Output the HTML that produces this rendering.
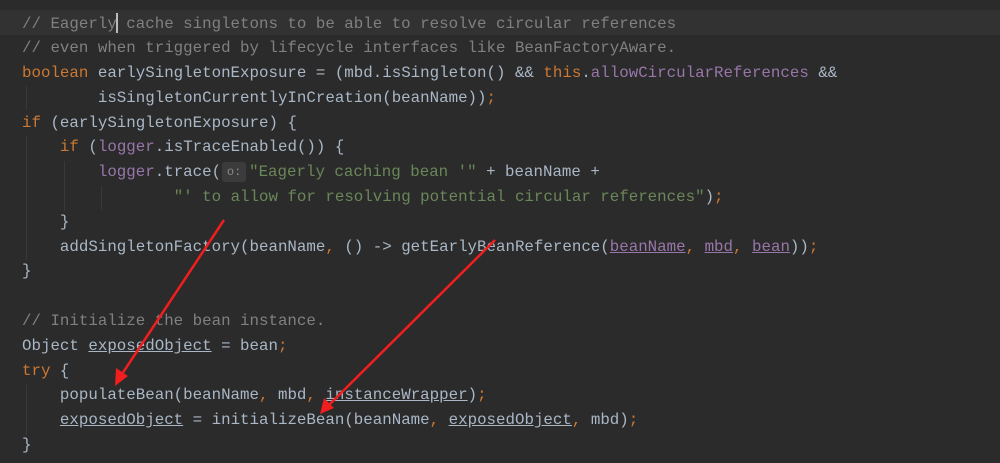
<!DOCTYPE html>
<html><head><meta charset="utf-8"><style>
body{margin:0;width:1000px;height:463px;background:#2b2b2b;overflow:hidden;position:relative}
.cl{position:absolute;left:0;top:10px;width:1000px;height:25px;background:#323232}
pre{position:absolute;left:22px;top:11.5px;margin:0;font-family:"Liberation Mono",monospace;font-size:15.8px;line-height:24.8px;color:#a9b7c6;white-space:pre}
.c{color:#808080}.k{color:#cc7832}.s{color:#6a8759}.f{color:#9876aa}.u{text-decoration:underline}.p{color:#9876aa;text-decoration:underline}
.h{display:inline-block;background:#3b3b3b;color:#8a8a8a;border-radius:3px;font-size:12px;width:24px;margin:0 3px 0 1px;text-align:center;line-height:20px;vertical-align:1px}
.g{position:absolute;width:1px;background:#393939}
.cur{position:absolute;left:116px;top:13px;width:2px;height:20px;background:#bbb}
</style></head><body>
<div class="cl"></div>
<div class="g" style="left:26px;top:86px;height:24px"></div>
<div class="g" style="left:26px;top:136px;height:124px"></div>
<div class="g" style="left:64px;top:161px;height:50px"></div>
<div class="g" style="left:101px;top:186px;height:24px"></div>
<div class="g" style="left:26px;top:385px;height:50px"></div>
<pre><span class="c">// Eagerly cache singletons to be able to resolve circular references</span>
<span class="c">// even when triggered by lifecycle interfaces like BeanFactoryAware.</span>
<span class="k">boolean</span> earlySingletonExposure = (mbd.isSingleton() &amp;&amp; <span class="k">this</span>.<span class="f">allowCircularReferences</span> &amp;&amp;
        isSingletonCurrentlyInCreation(beanName))<span class="k">;</span>
<span class="k">if</span> (earlySingletonExposure) {
    <span class="k">if</span> (<span class="f">logger</span>.isTraceEnabled()) {
        <span class="f">logger</span>.trace(<span class="h">o:</span><span class="s">"Eagerly caching bean '"</span> + beanName +
                <span class="s">"' to allow for resolving potential circular references"</span>)<span class="k">;</span>
    }
    addSingletonFactory(beanName<span class="k">,</span> () -&gt; getEarlyBeanReference(<span class="p">beanName</span><span class="k">,</span> <span class="p">mbd</span><span class="k">,</span> <span class="p">bean</span>))<span class="k">;</span>
}

<span class="c">// Initialize the bean instance.</span>
Object <span class="u">exposedObject</span> = bean<span class="k">;</span>
<span class="k">try</span> {
    populateBean(beanName<span class="k">,</span> mbd<span class="k">,</span> <span class="u">instanceWrapper</span>)<span class="k">;</span>
    <span class="u">exposedObject</span> = initializeBean(beanName<span class="k">,</span> <span class="u">exposedObject</span><span class="k">,</span> mbd)<span class="k">;</span>
}</pre>
<div class="cur"></div>
<svg style="position:absolute;left:0;top:0" width="1000" height="463">
<line x1="224" y1="220" x2="122" y2="374" stroke="#f01e1e" stroke-width="2.5"/>
<polygon points="115,386 116,368 128,376" fill="#f01e1e"/>
<line x1="495" y1="240" x2="328" y2="406" stroke="#f01e1e" stroke-width="2.5"/>
<polygon points="320,414 324,398 334,408" fill="#f01e1e"/>
</svg>
</body></html>
